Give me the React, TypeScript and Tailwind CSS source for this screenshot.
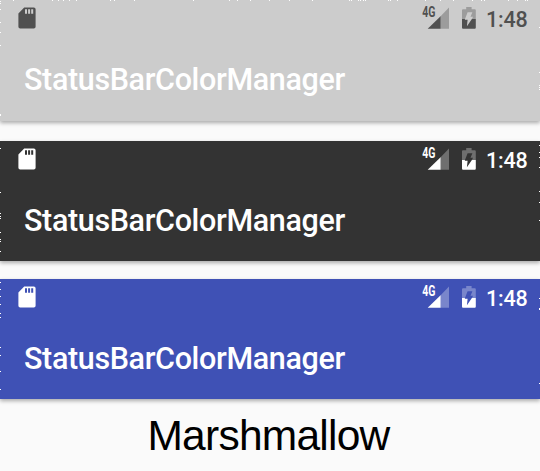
type Theme = { id: string; bar: string; ink: string; dim: string; height: string };

const themes: Theme[] = [
  { id: "light", bar: "bg-[#cccccc]", ink: "#505050", dim: "#9c9c9c", height: "h-[121px]" },
  { id: "dark", bar: "bg-[#333333] mt-5", ink: "#ffffff", dim: "#6f6f6f", height: "h-[120px]" },
  { id: "blue", bar: "bg-[#3f51b5] mt-[18px]", ink: "#ffffff", dim: "#7986cb", height: "h-[120px]" },
];

// White specks along the outer edges of the canvas.
const topSpecks = [13, 52, 58, 63, 69, 76, 110, 114, 134, 193, 229, 237, 250, 269, 289, 312, 349, 351, 358, 360, 363, 365, 388, 390, 397, 425, 440, 453, 472, 481, 484, 508, 517, 525, 527];
const leftSpecks = [1, 3, 9, 22, 32, 45, 114, 115, 148, 192, 213, 216, 218, 232, 239, 241, 251, 282, 289, 296, 304, 313, 317, 347, 355, 371, 389];
const rightSpecks = [27, 72, 85, 87, 89, 145, 152, 157, 167, 191, 202, 220, 298, 308, 309, 383];

function EdgeSpecks() {
  return (
    <svg className="pointer-events-none absolute inset-0 h-full w-full" viewBox="0 0 540 471" shapeRendering="crispEdges" fill="#ffffff">
      {topSpecks.map((x) => <rect key={`t${x}`} x={x} y="0" width="1" height="1" />)}
      {leftSpecks.map((y) => <rect key={`l${y}`} x="0" y={y} width="1" height="1" />)}
      {rightSpecks.map((y) => <rect key={`r${y}`} x="539" y={y} width="1" height="1" />)}
    </svg>
  );
}

function SdCard({ color }: { color: string }) {
  return (
    <svg className="mt-[7px] h-[22px] w-[18px]" viewBox="0 0 18 22">
      <path
        fill={color}
        fillRule="evenodd"
        d="M6.2.4H15.8Q17.6.4 17.6 2.2V19.8Q17.6 21.6 15.8 21.6H2.2Q.4 21.6 .4 19.8V6.4ZM7 2.3V6.8H9V2.3ZM10.1 2.3V6.8H12.1V2.3ZM13.2 2.3V6.8H15.2V2.3Z"
      />
    </svg>
  );
}

function Signal({ color, dim }: { color: string; dim: string }) {
  return (
    <svg className="h-[37px] w-[28px]" viewBox="0 0 28 37">
      <path fill={dim} d="M27 7.5V28.8H18.6V16.2Z" />
      <path fill={color} d="M18.6 16.2V28.8H5.7Z" />
      <g transform="scale(0.75 1)">
        <text x="0.3" y="17.3" fill={color} fontFamily="Roboto, sans-serif" fontSize="14" fontWeight="700">4G</text>
      </g>
    </svg>
  );
}

function Battery({ color, dim }: { color: string; dim: string }) {
  return (
    <svg className="mt-[7px] ml-3 h-[22px] w-[14px]" viewBox="0 0 14 22">
      <path fill={dim} d="M4.2 0H9.6V2.2H12.8Q13.8 2.2 13.8 3.2V12H9.9L11 9.8H8.5L10.4 5.3H5.6L3 12H0V3.2Q0 2.2 1 2.2H4.2Z" />
      <path fill={color} d="M0 12H3L2.8 12.8H5.6L4.9 19.3L9.9 12H13.8V20.6Q13.8 21.8 12.8 21.8H1Q0 21.8 0 20.6Z" />
    </svg>
  );
}

function Bar({ theme }: { theme: Theme }) {
  return (
    <section className={`${theme.bar} ${theme.height} shrink-0 shadow-[0_2px_4px_rgba(0,0,0,0.32)]`}>
      <div className="flex h-[37px] items-start pl-[18px]">
        <SdCard color={theme.ink} />
        <div className="ml-auto flex w-[118px] items-start">
          <Signal color={theme.ink} dim={theme.dim} />
          <Battery color={theme.ink} dim={theme.dim} />
          <span className="ml-[10px] h-[37px] text-[21.5px] leading-[39px] font-medium tracking-[-0.2px]" style={{ color: theme.ink }}>1:48</span>
        </div>
      </div>
      <h1 className="pl-6 text-[30.5px] leading-[85px] font-medium tracking-[-0.36px] text-white">StatusBarColorManager</h1>
    </section>
  );
}

export default function App() {
  return (
    <main className="relative flex h-[471px] w-[540px] flex-col overflow-hidden bg-[#fafafa] font-[Roboto,sans-serif]">
      {themes.map((theme) => (
        <Bar key={theme.id} theme={theme} />
      ))}
      <p className="pt-[13px] pr-[3px] text-center font-['Liberation_Sans',Arial,sans-serif] text-[42.5px] leading-[48px] tracking-[-0.75px] text-black">Marshmallow</p>
      <EdgeSpecks />
    </main>
  );
}
